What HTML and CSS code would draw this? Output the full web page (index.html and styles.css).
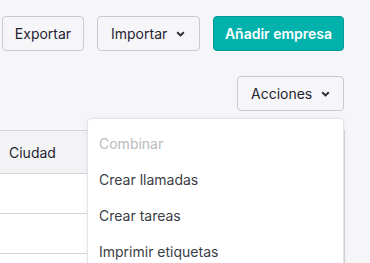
FILE: index.html
```html
<!DOCTYPE html>
<html lang="es">
<head>
    <meta charset="UTF-8">
    <title>Empresas</title>
    <link rel="stylesheet" href="styles.css">
</head>
<body>
<div class="page">
    <div class="toolbar">
        <button class="btn btn-export">Exportar</button>
        <button class="btn btn-import">Importar
            <svg class="chev" width="9" height="6" viewBox="0 0 9 6"><path d="M1.2 1.2L4.5 4.4 7.8 1.2" fill="none" stroke="#2b2d33" stroke-width="2"/></svg>
        </button>
        <button class="btn btn-primary">Añadir empresa</button>
    </div>
    <div class="actions-row">
        <button class="btn btn-actions">Acciones
            <svg class="chev" width="9" height="6" viewBox="0 0 9 6"><path d="M1.2 1.2L4.5 4.4 7.8 1.2" fill="none" stroke="#2b2d33" stroke-width="2"/></svg>
        </button>
    </div>
    <div class="table">
        <div class="thead">Ciudad</div>
        <div class="row"></div>
        <div class="row"></div>
        <div class="row"></div>
    </div>
    <ul class="menu">
        <li class="disabled">Combinar</li>
        <li>Crear llamadas</li>
        <li>Crear tareas</li>
        <li>Imprimir etiquetas</li>
    </ul>
</div>
</body>
</html>
```

FILE: styles.css
```css
*{
    margin: 0;
    padding: 0;
    box-sizing: border-box;
}
html, body{
    background: #f6f6f8;
    overflow: hidden;
}
body{
    font-family: Inter, "Noto Sans", sans-serif;
    font-size: 14px;
    color: #1f2430;
}
li{
    list-style: none;
}
.page{
    position: relative;
    width: 370px;
    height: 263px;
    overflow: hidden;
}
.toolbar{
    display: flex;
    gap: 13px;
    padding: 16px 26px 0 2px;
    height: 51px;
}
.btn{
    height: 35px;
    border: 1px solid #c9cacf;
    border-radius: 4px;
    background: #f6f6f8;
    font-family: inherit;
    font-size: 14px;
    color: #1f2430;
    display: flex;
    align-items: center;
    justify-content: center;
}
.btn-export{
    width: 82px;
}
.btn-import{
    width: 103px;
    justify-content: flex-start;
    padding-left: 13px;
}
.btn-primary{
    width: 131px;
    background: #00b1ac;
    border-color: #019a96;
    color: #fff;
    font-weight: 600;
}
.chev{
    margin-left: 9px;
}
.actions-row{
    display: flex;
    justify-content: flex-end;
    padding: 25px 26px 0 0;
    height: 79px;
}
.btn-actions{
    width: 107px;
    justify-content: flex-start;
    padding-left: 13px;
}
.table{
    width: 345px;
    border-top: 1px solid #d4d5d9;
    border-right: 1px solid #d4d5d9;
}
.thead{
    height: 43px;
    background: #f3f3f6;
    padding-left: 9px;
    line-height: 43px;
    border-bottom: 1px solid #d4d5d9;
}
.row{
    height: 40px;
    background: #fff;
    border-bottom: 1px solid #d4d5d9;
}
.menu{
    position: absolute;
    left: 87px;
    top: 118px;
    width: 257px;
    height: 160px;
    background: #fff;
    border: 1px solid #e2e3e6;
    border-radius: 4px;
    box-shadow: 0 2px 6px rgba(0,0,0,0.06);
    padding-top: 7px;
}
.menu li{
    height: 36px;
    line-height: 36px;
    padding-left: 11px;
    color: #3a3d45;
}
.menu li.disabled{
    color: #b9bbc0;
}
```
